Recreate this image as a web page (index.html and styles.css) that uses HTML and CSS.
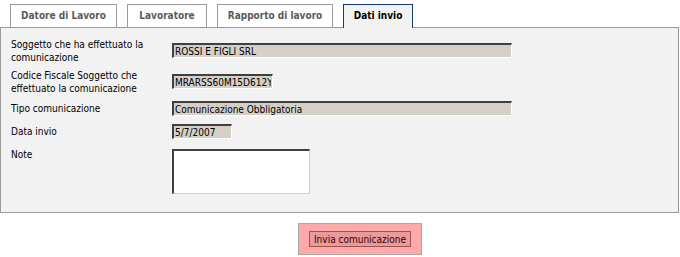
FILE: index.html
```html
<!DOCTYPE html>
<html lang="it">
<head>
  <meta charset="UTF-8">
  <title>Dati invio</title>
  <link rel="stylesheet" href="styles.css">
</head>
<body>
  <div class="tabs">
    <div class="tab tab-datore">Datore di Lavoro</div>
    <div class="tab tab-lavoratore">Lavoratore</div>
    <div class="tab tab-rapporto">Rapporto di lavoro</div>
    <div class="tab tab-invio active">Dati invio</div>
  </div>

  <div class="panel">
    <div class="field double">
      <label>Soggetto che ha effettuato la<br>comunicazione</label>
      <input type="text" class="campo lungo" value="ROSSI E FIGLI SRL" readonly>
    </div>
    <div class="field double">
      <label>Codice Fiscale Soggetto che<br>effettuato la comunicazione</label>
      <input type="text" class="campo medio" value="MRARSS60M15D612Y" readonly>
    </div>
    <div class="field single">
      <label>Tipo comunicazione</label>
      <input type="text" class="campo lungo" value="Comunicazione Obbligatoria" readonly>
    </div>
    <div class="field single">
      <label>Data invio</label>
      <input type="text" class="campo corto" value="5/7/2007" readonly>
    </div>
    <div class="field note">
      <label>Note</label>
      <textarea class="note-box"></textarea>
    </div>
  </div>

  <div class="actions">
    <div class="actions-box">
      <button type="button" class="invia">Invia comunicazione</button>
    </div>
  </div>
</body>
</html>
```

FILE: styles.css
```css
body {
  margin: 0;
  background-color: #ffffff;
  font-family: "DejaVu Sans Condensed", "DejaVu Sans", sans-serif;
  font-size: 10px;
  color: #000000;
}

.tabs {
  display: flex;
  gap: 10px;
  padding: 4px 0 0 10px;
}

.tab {
  box-sizing: border-box;
  height: 23px;
  line-height: 22px;
  border: 1px solid #9a9a9a;
  border-bottom: none;
  text-align: center;
  font-weight: bold;
  font-size: 10px;
  color: #5a5a5a;
  background-color: #ffffff;
}

.tab-datore {
  width: 107px;
}

.tab-lavoratore {
  width: 80px;
}

.tab-rapporto {
  width: 116px;
}

.tab-invio {
  width: 70px;
}

.tab.active {
  border-color: #123a6e;
  color: #000000;
  background-color: #f2f2f2;
  margin-bottom: -1px;
  height: 24px;
  position: relative;
}

.panel {
  margin-right: 1px;
  border: 1px solid #9a9a9a;
  background-color: #f2f2f2;
  padding: 7px 10px 18px 10px;
}

.field {
  display: flex;
  align-items: center;
}

.field label {
  width: 161px;
  line-height: 13px;
}

.field.double {
  height: 31px;
}

.field.single {
  height: 23px;
}

.field.note {
  align-items: flex-start;
  margin-top: 5px;
}

.campo {
  box-sizing: border-box;
  height: 15px;
  margin: 0;
  padding: 0 1px;
  font-family: inherit;
  font-size: 10px;
  color: #000000;
  background-color: #d4d0c8;
  border-style: solid;
  border-width: 2px 1px 1px 2px;
  border-color: #404040 #ffffff #ffffff #404040;
  outline: none;
}

.campo.lungo {
  width: 340px;
}

.campo.medio {
  width: 101px;
}

.campo.corto {
  width: 60px;
}

.note-box {
  box-sizing: border-box;
  width: 138px;
  height: 45px;
  margin: 1px 0 0 0;
  padding: 1px;
  resize: none;
  background-color: #ffffff;
  border-style: solid;
  border-width: 2px 1px 1px 2px;
  border-color: #404040 #d4d0c8 #d4d0c8 #404040;
}

.actions {
  display: flex;
  justify-content: center;
  padding: 10px 0 0 40px;
}

.actions-box {
  padding: 7px 10px;
  border: 1px solid #a8a8a8;
  background-color: #ffaaaa;
}

.invia {
  box-sizing: border-box;
  height: 16px;
  width: 102px;
  padding: 0;
  font-family: inherit;
  font-size: 10px;
  color: #3a0000;
  background-color: #e99a9a;
  border: 1px solid #a25252;
  cursor: pointer;
}
```
